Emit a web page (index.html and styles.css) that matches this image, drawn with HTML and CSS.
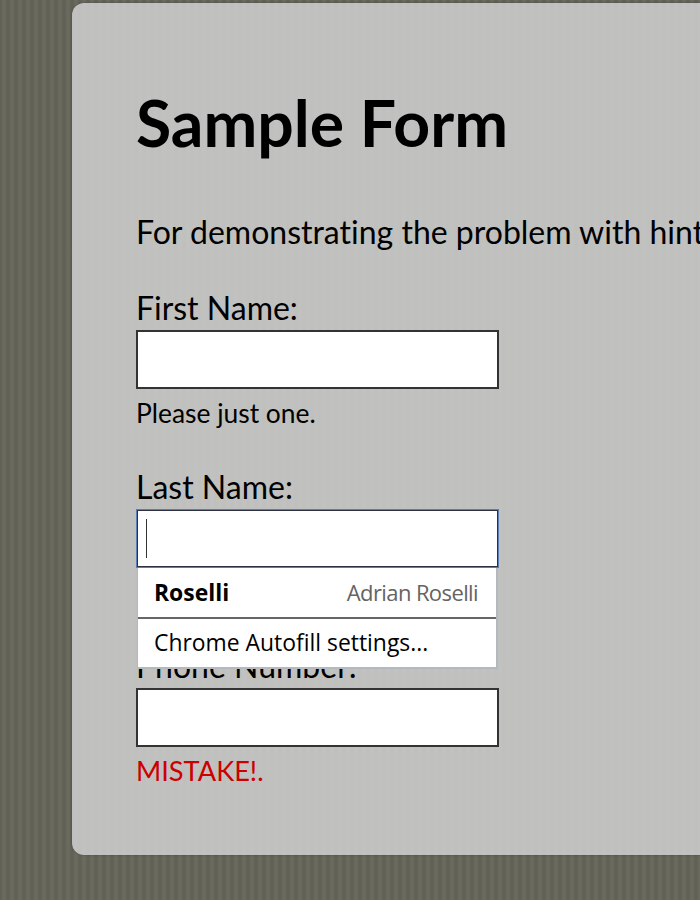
FILE: index.html
```html
<!DOCTYPE html>
<html lang="en">
<head>
<meta charset="utf-8">
<title>Sample Form</title>
<link rel="stylesheet" href="styles.css">
</head>
<body>
<main class="card">
  <h1 class="title">Sample Form</h1>
  <p class="intro">For demonstrating the problem with hint text and error messages.</p>
  <form class="form">
    <div class="field">
      <label class="label" for="first">First Name:</label>
      <div class="control"><input class="input" id="first" type="text"></div>
      <p class="hint">Please just one.</p>
    </div>
    <div class="field">
      <label class="label" for="last">Last Name:</label>
      <div class="control">
        <div class="input input-focus"><span class="caret"></span></div>
        <div class="autofill">
          <div class="autofill-row autofill-suggestion">
            <span class="autofill-value">Roselli</span>
            <span class="autofill-meta">Adrian Roselli</span>
          </div>
          <div class="autofill-row autofill-settings">Chrome Autofill settings...</div>
        </div>
      </div>
      <p class="hint">&nbsp;</p>
    </div>
    <div class="field">
      <label class="label" for="phone">Phone Number:</label>
      <div class="control"><input class="input" id="phone" type="text"></div>
      <p class="hint error">MISTAKE!.</p>
    </div>
  </form>
</main>
</body>
</html>
```
FILE: styles.css
```css
html, body {
  margin: 0;
  height: 900px;
  overflow: hidden;
}
body {
  box-sizing: border-box;
  padding: 3px 0 0 72px;
  font-family: Lato, "Liberation Sans", sans-serif;
  font-variant-ligatures: none;
  color: #000;
  background-color: #66655a;
  background-image: repeating-linear-gradient(90deg, #605f54 0, #6d6c60 4px, #605f54 8px);
}
.card {
  box-sizing: border-box;
  width: 900px;
  height: 852px;
  padding: 81px 64px 0;
  border-radius: 12px;
  background-color: #c1c1bf;
  background-image: repeating-linear-gradient(90deg, #bfbfbd 0, #c2c2c0 4px, #bfbfbd 8px);
  box-shadow: 0 0 2px rgba(0, 0, 0, 0.3);
}
.title {
  margin: 0;
  font-size: 64.3px;
  line-height: 77px;
  font-weight: 700;
  white-space: nowrap;
}
.intro {
  margin: 52px 0 0;
  font-size: 32px;
  line-height: 38px;
  white-space: nowrap;
}
.form {
  margin-top: 38px;
}
.field {
  height: 179px;
}
.label {
  display: block;
  padding-bottom: 4px;
  font-size: 32px;
  line-height: 37px;
}
.control {
  position: relative;
  width: 363px;
}
.input {
  display: block;
  box-sizing: border-box;
  width: 363px;
  height: 59px;
  margin: 0;
  padding: 0;
  border: 2px solid #333;
  background: #fff;
}
.input-focus {
  position: relative;
  border: 1px solid #5a7db5;
  box-shadow: inset 0 0 0 1px #2c3244;
}
.caret {
  position: absolute;
  left: 9px;
  top: 9px;
  width: 1px;
  height: 39px;
  background: #333;
}
.hint {
  margin: 5px 0 0;
  font-size: 26.4px;
  line-height: 38px;
}
.error {
  color: #c00;
  font-size: 27.2px;
}
.autofill {
  position: absolute;
  left: 1px;
  top: 59px;
  box-sizing: border-box;
  width: 361px;
  height: 101px;
  border-style: solid;
  border-color: #b4b9c0;
  border-width: 0 2px 2px 1px;
  background: #fff;
  font-family: "Open Sans", "Noto Sans", sans-serif;
  font-size: 22.9px;
}
.autofill-row {
  display: flex;
  justify-content: space-between;
  align-items: center;
  box-sizing: border-box;
  height: 46px;
  padding: 0 18px 0 16px;
  white-space: nowrap;
}
.autofill-suggestion {
  height: 51px;
  border-bottom: 2px solid #666;
}
.autofill-value {
  font-weight: 700;
}
.autofill-meta {
  padding-bottom: 2px;
  color: #646464;
  font-size: 22px;
  letter-spacing: -0.6px;
}
```
